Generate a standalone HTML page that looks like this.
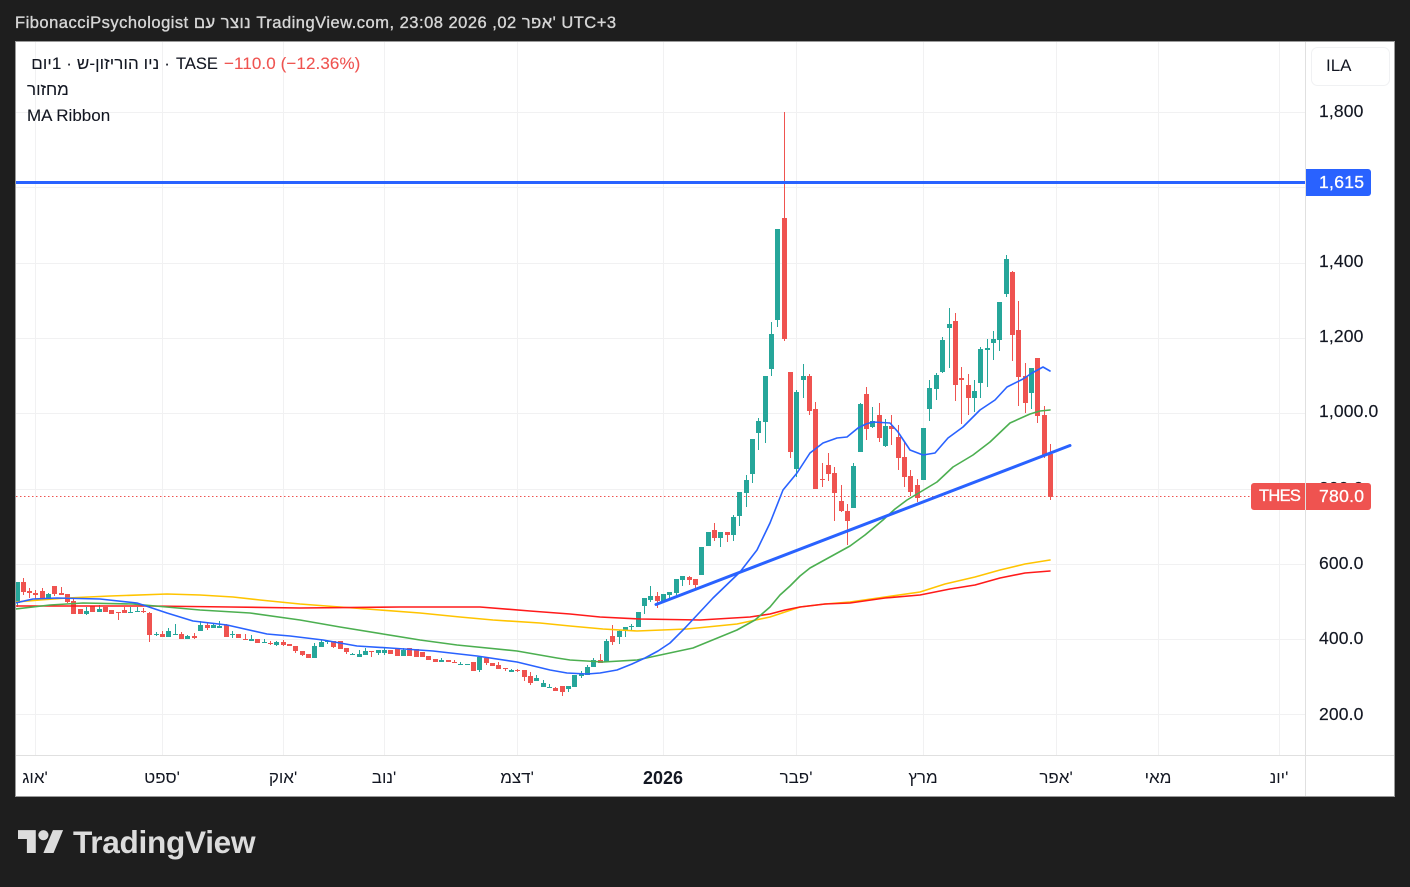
<!DOCTYPE html>
<html lang="he"><head><meta charset="utf-8"><title>TradingView</title>
<style>
html,body{margin:0;padding:0;background:#1e1e1e;width:1410px;height:887px;overflow:hidden}
body{position:relative;font-family:"Liberation Sans","Noto Sans CJK JP","DejaVu Sans",sans-serif}
.t{position:absolute;white-space:nowrap;line-height:20px}
#hdr{left:15px;top:13px;color:#d6d6d6;font-size:16.5px;font-weight:400;-webkit-text-stroke:.35px #d6d6d6;direction:ltr;letter-spacing:.5px}
#chart{position:absolute;left:15px;top:41px;width:1378px;height:754px;background:#fff;border:1px solid #9a9a9a;overflow:hidden}
.lg{color:#131722;font-size:17px;-webkit-text-stroke:.1px #131722}
.p{color:#131722;font-size:17.5px;left:1319px;letter-spacing:.15px;-webkit-text-stroke:.15px #131722}
.x{color:#131722;font-size:17px;transform:translateX(-50%);top:768px;direction:ltr}
.box{position:absolute;height:27px;line-height:27px;color:#fff;font-size:17.5px;-webkit-text-stroke:.3px #fff;letter-spacing:.3px}
</style></head><body>
<div class="t" id="hdr">FibonacciPsychologist נוצר עם TradingView.com, 23:08 2026 ,02 אפר' UTC+3</div>
<div id="chart"></div>
<svg width="1410" height="887" style="position:absolute;left:0;top:0" xmlns="http://www.w3.org/2000/svg">
<defs><clipPath id="c"><rect x="16" y="42" width="1289" height="713"/></clipPath></defs>
<g stroke="#f1f1f2" stroke-width="1" shape-rendering="crispEdges" fill="none">
<path d="M16 112.5H1305M16 187.5H1305M16 263.5H1305M16 338.5H1305M16 413.5H1305M16 489.5H1305M16 564.5H1305M16 639.5H1305M16 714.5H1305"/>
<path d="M35.5 42V755M162.5 42V755M283.5 42V755M384.5 42V755M517.5 42V755M663.5 42V755M796.5 42V755M923.5 42V755M1056.5 42V755M1158.5 42V755M1279.5 42V755"/>
</g>
<g clip-path="url(#c)">
<path d="M16 496.5H1305" stroke="#ef5350" stroke-width="1" stroke-dasharray="1.5 2.5" fill="none" shape-rendering="crispEdges"/>
<g fill="none" shape-rendering="crispEdges">
<path stroke="#26a69a" stroke-width="1" d="M17.5 582V607M48.5 593V600M86.5 607V615M99.5 605V612M130.5 607V613M137.5 607V612M156.5 632V636M168.5 628V637M175.5 624V635M187.5 635V639M200.5 621V631M213.5 623V628M219.5 621V628M232.5 631V638M251.5 635V641M264.5 639V643M276.5 641V646M314.5 643V658M321.5 640V647M327.5 640V644M352.5 653V655M359.5 650V657M365.5 648V655M378.5 650V655M384.5 648V655M403.5 648V656M441.5 658V662M460.5 662V665M479.5 657V672M511.5 669V672M536.5 675V681M543.5 680V687M549.5 684V688M568.5 686V692M581.5 671V678M587.5 665V675M593.5 658V667M606.5 639V662M619.5 630V644M625.5 627V637M631.5 624V631M644.5 598V614M650.5 586V602M669.5 592V599M676.5 579V595M682.5 576V586M720.5 532V547M733.5 515V541M739.5 492V526M746.5 475V507M752.5 439V483M758.5 418V450M765.5 376V443M771.5 322V376M777.5 229V327M796.5 390V477M803.5 364V398M853.5 463V508M860.5 403V452M872.5 407V428M885.5 419V447M929.5 380V421M936.5 373V400M942.5 337V373M949.5 308V368M974.5 380V412M980.5 347V398M987.5 339V387M993.5 331V360M999.5 302V351M1006.5 255V297M1031.5 368V409"/>
<path stroke="#26a69a" stroke-width="5" d="M17.5 582V603M48.5 594V600M86.5 611V614M99.5 609V612M130.5 612V613M137.5 611V612M156.5 634V635M168.5 631V637M175.5 634V635M187.5 636V639M200.5 625V631M213.5 625V628M219.5 626V628M232.5 634V635M251.5 639V641M264.5 642V643M276.5 642V645M314.5 646V658M321.5 642V647M327.5 641V642M352.5 654V655M359.5 654V657M365.5 651V655M378.5 650V653M384.5 650V653M403.5 650V656M441.5 660V662M460.5 664V665M467.5 664V665M479.5 657V670M511.5 670V672M536.5 678V681M543.5 683V687M549.5 687V688M568.5 686V689M574.5 675V687M581.5 674V676M587.5 667V675M593.5 660V667M606.5 641V662M619.5 631V637M625.5 627V631M631.5 626V627M638.5 612V627M644.5 598V606M650.5 596V600M663.5 594V601M669.5 592V595M676.5 579V593M682.5 576V580M701.5 547V575M708.5 532V546M720.5 532V538M733.5 517V535M739.5 492V516M746.5 480V493M752.5 439V474M758.5 421V433M765.5 376V422M771.5 334V369M777.5 229V320M796.5 392V469M803.5 376V380M853.5 466V508M860.5 404V452M872.5 421V427M885.5 426V446M923.5 428V480M929.5 388V409M936.5 375V389M942.5 340V372M949.5 324V328M974.5 391V398M980.5 349V383M987.5 348V350M993.5 339V343M999.5 302V340M1006.5 259V294M1031.5 368V393"/>
<path stroke="#ef5350" stroke-width="1" d="M23.5 578V595M29.5 588V598M35.5 590V599M42.5 588V600M54.5 586V596M61.5 587V595M67.5 594V603M73.5 599V614M118.5 612V620M124.5 607V613M143.5 608V613M149.5 612V642M162.5 631V637M181.5 632V639M194.5 633V639M207.5 623V630M226.5 624V637M245.5 634V640M270.5 641V645M283.5 640V646M295.5 646V653M302.5 651V656M333.5 641V648M346.5 648V654M371.5 651V657M454.5 660V663M486.5 658V665M498.5 662V669M505.5 668V671M517.5 669V672M524.5 670V681M530.5 672V685M555.5 687V691M562.5 686V696M600.5 654V663M612.5 625V645M657.5 592V608M689.5 576V585M695.5 579V589M714.5 523V541M727.5 532V542M784.5 112V341M790.5 372V458M809.5 374V415M815.5 402V489M822.5 463V487M828.5 453V481M834.5 467V521M841.5 485V512M847.5 504V545M866.5 387V440M879.5 403V442M891.5 415V445M898.5 425V470M904.5 442V487M910.5 470V496M917.5 479V502M955.5 313V401M961.5 367V424M968.5 374V415M1012.5 271V361M1018.5 301V406M1025.5 363V413M1037.5 358V423M1044.5 406V458M1050.5 444V500"/>
<path stroke="#ef5350" stroke-width="5" d="M23.5 582V592M29.5 591V593M35.5 593V595M42.5 591V599M54.5 586V594M61.5 593V595M67.5 594V602M73.5 601V614M80.5 609V614M92.5 606V612M105.5 607V612M111.5 610V614M118.5 612V613M124.5 610V613M143.5 611V612M149.5 613V635M162.5 634V637M181.5 634V639M194.5 636V638M207.5 625V628M226.5 625V637M238.5 634V638M245.5 639V640M257.5 639V643M270.5 643V644M283.5 642V645M289.5 644V646M295.5 646V651M302.5 651V655M308.5 654V658M333.5 641V647M340.5 641V649M346.5 648V652M371.5 651V652M390.5 650V654M397.5 648V656M409.5 648V656M416.5 649V657M422.5 652V657M428.5 656V660M435.5 659V662M448.5 660V662M454.5 662V663M473.5 662V671M486.5 658V663M492.5 663V666M498.5 665V669M505.5 668V669M517.5 670V671M524.5 670V677M530.5 676V683M555.5 688V691M562.5 686V692M600.5 660V663M612.5 636V642M657.5 596V601M689.5 577V580M695.5 579V585M714.5 530V538M727.5 532V535M784.5 218V339M790.5 372V452M809.5 376V411M815.5 409V489M822.5 479V480M828.5 465V474M834.5 473V493M841.5 501V511M847.5 511V521M866.5 394V429M879.5 415V438M891.5 426V429M898.5 437V458M904.5 457V477M910.5 476V492M917.5 485V498M955.5 321V385M961.5 378V380M968.5 385V398M1012.5 272V335M1018.5 330V377M1025.5 376V403M1037.5 358V416M1044.5 415V456M1050.5 454V497"/>
</g>
<g fill="none" stroke-width="1.6" stroke-linejoin="round" stroke-linecap="round">
<polyline stroke="#ffc400" points="15,602 40,600 67,598 110,596 167,594 200,595 233,597 260,600 280,602 300,604 340,607 380,610 420,613 460,617 493,620 540,623 570,626 603,629 637,631 687,629 737,624 770,617 785,612 800,607 825,604 850,602 885,597 920,592 945,584 975,577 1000,570 1025,564 1050,560"/>
<polyline stroke="#ff1a1a" points="15,606 80,606 150,606 230,607 300,608 400,607 480,607 530,611 570,614 600,617 640,619 700,620 750,617 770,614 785,610 800,607 825,604 850,603 885,598 920,595 950,589 975,585 1000,578 1025,573 1050,571"/>
<polyline stroke="#4caf50" points="15,609 50,605 83,603 133,604 200,610 250,613 300,620 340,627 383,634 420,640 457,645 517,651 557,658 570,660 603,662 637,660 693,648 737,630 755,620 770,607 780,595 790,586 800,576 810,568 830,557 850,546 865,535 883,520 895,509 907,500 922,491 937,482 953,467 973,455 990,442 1010,423 1030,414 1040,411 1050,410"/>
<polyline stroke="#2962ff" points="15,603 33,599 57,598 100,599 137,603 167,613 193,621 227,625 267,634 290,636 323,640 357,646 390,648 433,651 477,656 517,662 550,670 567,673 587,674 600,673 617,670 632,664 645,658 658,651 670,643 685,628 713,598 740,572 757,550 770,523 783,490 797,473 810,453 823,443 837,438 847,437 858,428 866,424 873,422 890,423 898,432 910,450 923,455 935,453 948,438 963,427 980,410 995,400 1007,387 1023,379 1032,373 1043,367 1050,371"/>
<path d="M656 604.5L1070 445.5" stroke="#2962ff" stroke-width="3"/>
<path d="M16 182.5H1305" stroke="#2962ff" stroke-width="3" shape-rendering="crispEdges"/>
</g>
</g>
<g shape-rendering="crispEdges" stroke="#e0e0e0" stroke-width="1"><path d="M1305.5 42V796M16 755.5H1394"/></g>
<rect x="1311.5" y="47.5" width="78" height="38" rx="6" fill="#fff" stroke="#f0f1f3"/>
<g fill="#dcdcdc">
<path transform="translate(18,825) scale(1.27)" d="M14 22H7V11H0V4h14v18zM28 22h-8l7.5-18h8L28 22z"/><circle transform="translate(18,825) scale(1.27)" cx="20" cy="8" r="4"/></g>
</svg>
<div class="t lg" style="left:176px;top:54px;font-size:16.5px">TASE</div>
<div class="t lg" dir="rtl" style="right:1240px;top:54px;letter-spacing:.1px">· ניו הוריזון-ש · 1יום</div>
<div class="t lg" style="left:224px;top:54px;color:#ef5350;letter-spacing:.1px;-webkit-text-stroke:.1px #ef5350">−110.0 (−12.36%)</div>
<div class="t lg" dir="rtl" style="left:27px;top:80px">מחזור</div>
<div class="t lg" style="left:27px;top:106px">MA Ribbon</div>
<div class="t" style="left:1326px;top:56px;font-size:17px;color:#131722">ILA</div>
<div class="t p" style="top:101px">1,800</div>
<div class="t p" style="top:251px">1,400</div>
<div class="t p" style="top:326px">1,200</div>
<div class="t p" style="top:401px">1,000.0</div>
<div class="t p" style="top:478px">800.0</div>
<div class="t p" style="top:553px">600.0</div>
<div class="t p" style="top:628px">400.0</div>
<div class="t p" style="top:704px">200.0</div>
<div class="box" style="left:1306px;top:169px;width:52px;padding-left:13px;background:#2962ff;border-radius:0 3px 3px 0">1,615</div>
<div class="box" style="left:1251px;top:483px;width:46px;padding-left:8px;background:#ef5350;border-radius:3px 0 0 3px;font-size:16.5px;letter-spacing:-.7px;overflow:hidden;white-space:nowrap">THES</div>
<div class="box" style="left:1306px;top:483px;width:52px;padding-left:13px;background:#ef5350;border-radius:0 3px 3px 0">780.0</div>
<div class="t x" style="left:35px">אוג'</div>
<div class="t x" style="left:162px">ספט'</div>
<div class="t x" style="left:283px">אוק'</div>
<div class="t x" style="left:384px">נוב'</div>
<div class="t x" style="left:517px">דצמ'</div>
<div class="t x" style="left:663px;font-weight:700;font-size:18px">2026</div>
<div class="t x" style="left:796px">פבר'</div>
<div class="t x" style="left:923px">מרץ</div>
<div class="t x" style="left:1056px">אפר'</div>
<div class="t x" style="left:1158px">מאי</div>
<div class="t x" style="left:1279px">יונ'</div>
<div class="t" style="left:73px;top:822px;line-height:40px;font-size:31.6px;font-weight:700;color:#dcdcdc;letter-spacing:-.3px">TradingView</div>
</body></html>
